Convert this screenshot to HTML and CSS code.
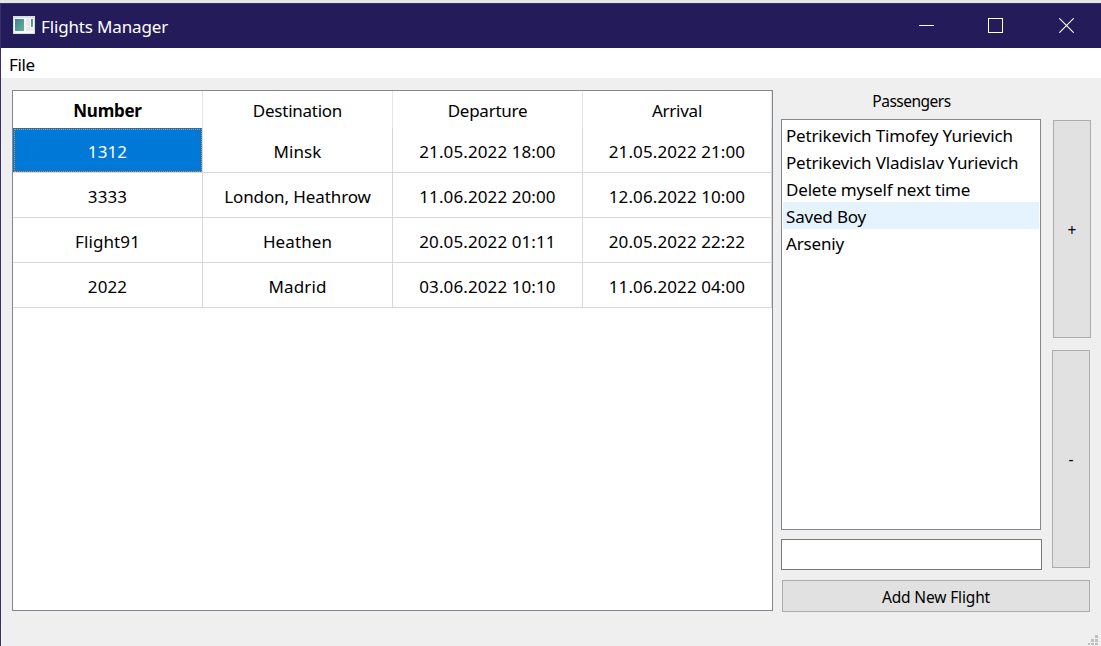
FILE: index.html
```html
<!DOCTYPE html>
<html lang="en">
<head>
<meta charset="utf-8">
<title>Flights Manager</title>
<link rel="stylesheet" href="styles.css">
</head>
<body>
<div class="window">
  <header class="titlebar">
    <svg class="app-icon" width="22" height="18" viewBox="0 0 22 18">
      <defs><linearGradient id="pane" x1="0" y1="0" x2="1" y2="1"><stop offset="0" stop-color="#3f7fa0"/><stop offset="1" stop-color="#67b58c"/></linearGradient></defs>
      <rect width="22" height="18" fill="#d9dde0"/>
      <rect x="1" y="2" width="20" height="15" fill="#f7f7f7"/>
      <rect x="2" y="3" width="9" height="12" fill="url(#pane)"/>
      <rect x="13" y="3" width="4" height="7" fill="#e8e8e8"/>
      <rect x="13" y="11" width="4" height="4" fill="#e8e8e8"/>
      <rect x="18" y="3" width="2" height="8" fill="url(#pane)"/>
      <rect x="18" y="12" width="2" height="3" fill="#e8e8e8"/>
    </svg>
    <h1 class="title">Flights Manager</h1>
    <div class="controls">
      <svg width="15" height="15"><path d="M0 7.5H15" stroke="#fff"/></svg>
      <svg width="15" height="15"><rect x=".5" y=".5" width="14" height="14" fill="none" stroke="#fff"/></svg>
      <svg class="close" width="15" height="15"><path d="M.3.3l14.4 14.4M14.7.3L.3 14.7" stroke="#fff" stroke-width="1.1"/></svg>
    </div>
  </header>
  <nav class="menubar"><span class="menu">File</span></nav>
  <main class="content">
    <div class="table-frame">
      <table class="flights">
        <colgroup><col class="wide"><col class="wide"><col class="wide"><col></colgroup>
        <thead><tr><th class="sorted">Number</th><th>Destination</th><th>Departure</th><th>Arrival</th></tr></thead>
        <tbody>
          <tr><td class="selected">1312</td><td>Minsk</td><td>21.05.2022 18:00</td><td>21.05.2022 21:00</td></tr>
          <tr><td>3333</td><td class="tight">London, Heathrow</td><td>11.06.2022 20:00</td><td>12.06.2022 10:00</td></tr>
          <tr><td>Flight91</td><td>Heathen</td><td>20.05.2022 01:11</td><td>20.05.2022 22:22</td></tr>
          <tr><td>2022</td><td>Madrid</td><td>03.06.2022 10:10</td><td>11.06.2022 04:00</td></tr>
        </tbody>
      </table>
    </div>
    <section class="side">
      <div class="side-top">
        <div class="passengers">
          <div class="label">Passengers</div>
          <ul class="list">
            <li>Petrikevich Timofey Yurievich</li>
            <li>Petrikevich Vladislav Yurievich</li>
            <li>Delete myself next time</li>
            <li class="hover">Saved Boy</li>
            <li>Arseniy</li>
          </ul>
          <input class="name-input" type="text" aria-label="Passenger name">
        </div>
        <div class="actions">
          <button class="btn add">+</button>
          <button class="btn remove">-</button>
        </div>
      </div>
      <button class="btn new-flight">Add New Flight</button>
    </section>
    <svg class="grip" width="10" height="10" fill="#bfbfbf"><path d="M7 0h3v3H7zM3 4h3v3H3zM7 4h3v3H7zM0 8h2v2H0zM3 8h3v2H3zM7 8h3v2H7z"/></svg>
  </main>
</div>
</body>
</html>
```
FILE: styles.css
```css
* { box-sizing: border-box; }
body {
  margin: 0;
  width: 1101px;
  height: 646px;
  overflow: hidden;
  background: #e6e6e6;
  color: #000;
  font: 17px/27px "Noto Sans", "Open Sans", sans-serif;
}
.window {
  height: 646px;
  padding-top: 3px;
  display: flex;
  flex-direction: column;
}
.titlebar {
  height: 45px;
  flex: none;
  display: flex;
  align-items: center;
  padding: 0 27px 0 12px;
  background: #241b5a;
  border-top: 1px solid #3a3169;
  border-left: 1px solid #3a3169;
  color: #fff;
}
.app-icon { margin: -2px 6px 0 0; }
.title {
  margin: 1px 0 0;
  font-size: 17px;
  font-weight: 400;
  letter-spacing: -.15px;
}
.controls { display: flex; gap: 54px; margin: -2px 0 0 auto; }
.close { margin-left: 2px; }
.menubar {
  height: 30px;
  flex: none;
  padding: 3px 8px;
  background: #fff;
  border-left: 1px solid #3a2e70;
}
.menu { letter-spacing: -.4px; }
.content {
  position: relative;
  flex: 1;
  display: flex;
  gap: 8px;
  padding: 12px 10px 0 11px;
  background: #efefef;
  border-left: 1px solid #3a2e70;
}
.table-frame {
  width: 761px;
  height: 521px;
  border: 1px solid #828790;
  background: #fff;
}
.flights {
  width: 759px;
  table-layout: fixed;
  border-collapse: separate;
  border-spacing: 0;
  text-align: center;
}
.wide { width: 190px; }
.flights th {
  height: 37px;
  padding: 1px 0 0;
  font-weight: 400;
  letter-spacing: -.25px;
  border-right: 1px solid #e5e5e5;
}
.flights th.sorted { font-weight: 700; }
.flights td {
  height: 45px;
  padding: 3px 0 0;
  letter-spacing: .1px;
  border-right: 1px solid #d8d8d8;
  border-bottom: 1px solid #d8d8d8;
}
.flights .tight { letter-spacing: -.1px; }
.flights .selected {
  background: #0078d7;
  background-clip: padding-box;
  color: #fff;
  outline: 1px dotted #ff8728;
  outline-offset: -2px;
}
.side { width: 310px; }
.side-top { display: flex; justify-content: space-between; }
.passengers { width: 261px; }
.label {
  height: 29px;
  line-height: 22px;
  font-size: 15.5px;
  letter-spacing: -.5px;
  text-align: center;
}
.list {
  width: 260px;
  height: 411px;
  margin: 0 0 9px;
  padding: 1px;
  list-style: none;
  border: 1px solid #828790;
  background: #fff;
}
.list li {
  height: 27px;
  padding-left: 3px;
  line-height: 29px;
  white-space: nowrap;
  letter-spacing: -.18px;
}
.hover { background: #e5f3ff; }
.name-input {
  display: block;
  width: 261px;
  height: 31px;
  border: 1px solid #7a7a7a;
  background: #fff;
}
.actions {
  width: 39px;
  display: flex;
  flex-direction: column;
  gap: 12px;
  padding-top: 30px;
}
.btn {
  padding: 2px 0 0;
  border: 1px solid #adadad;
  background: #e1e1e1;
  color: #000;
  font: 15.5px/22px "Noto Sans", "Open Sans", sans-serif;
}
.add, .remove { width: 38px; height: 218px; }
.add { align-self: flex-end; }
.remove { padding-top: 0; }
.new-flight {
  display: block;
  width: 308px;
  height: 32px;
  margin: 10px 0 0 1px;
  letter-spacing: -.15px;
}
.grip { position: absolute; right: 3px; bottom: 1px; }
```
